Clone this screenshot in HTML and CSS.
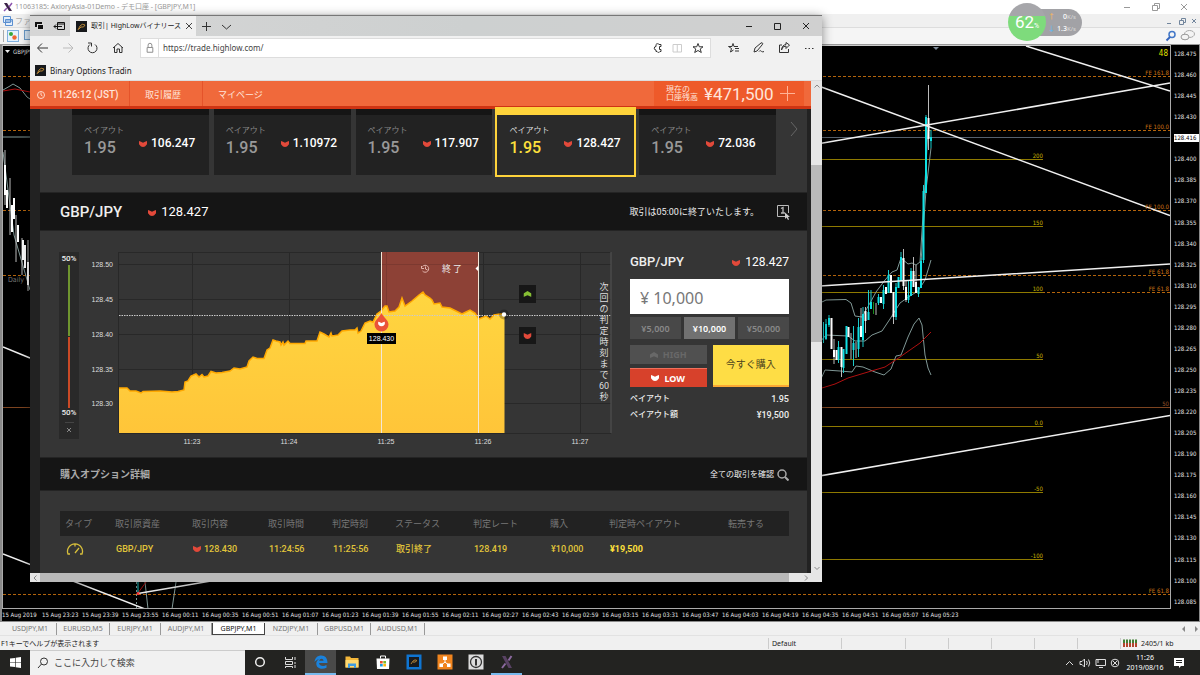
FILE: index.html
```html
<!DOCTYPE html>
<html lang="ja">
<head>
<meta charset="utf-8">
<title>Trading desktop</title>
<link rel="stylesheet" href="styles.css">
</head>
<body>
<svg class="defs" width="0" height="0" aria-hidden="true">
  <symbol id="down" viewBox="0 0 8 6"><path d="M0 0L2 .8L4 1.800L6 .8L8 0V3.200L6 5.500L4 6L2 5.500L0 3.200Z" fill="currentColor"/></symbol>
  <symbol id="up" viewBox="0 0 8 6"><path d="M0 2.600L4 0L8 2.600V6L4 4.200L0 6Z" fill="currentColor"/></symbol>
  <symbol id="fish" viewBox="0 0 11 11"><rect width="11" height="11" fill="#17191c"/><path d="M2 9L4 5Q6 2 9 4Q8 7 5 6L3 8" fill="none" stroke="#b98736"/></symbol>
</svg>

<main class="mt">
  <header class="mt-title">
    <svg class="ic12" viewBox="0 0 12 12"><path d="M2 2H5L10 10H7Z" fill="#3b2348"/><path d="M10 2L7 6M5 7L2 10" stroke="#8d54ad" stroke-width="1.5"/></svg>
    <span>11063185: AxioryAsia-01Demo - デモ口座 - [GBPJPY,M1]</span>
    <svg class="caption" viewBox="0 0 66 12" fill="none" stroke="#999"><path d="M0 6.5H6M28.500 4.500H33.500V9.500H28.500ZM30.500 4.500V2.500H35.500V7.500H33.500M57 3L63 9M63 3L57 9"/></svg>
  </header>
  <div class="mt-menu">
    <svg class="ic12" viewBox="0 0 12 12" fill="#e4effb" stroke="#5b8fd0"><path d="M1.500 1.500H8.500V7.500H1.500ZM3.500 4.500H10.500V10.500H3.500ZM4 6H10"/></svg>
    <span>ファイル</span>
    <svg class="mdi" viewBox="0 0 32 12" fill="none" stroke="#71859c"><path d="M1 8.500H5M13.500 5.500H17.500V9.500H13.500ZM15.500 5V3.500H19.500V7.500H18M26 4L30 8M30 4L26 8"/></svg>
  </div>
  <div class="mt-tools">
    <svg class="tool-left" viewBox="0 0 40 14"><path d="M1.500 1V13" stroke="#aaa"/><rect x="5.500" y="1.500" width="11" height="11" fill="#e6f2fd" stroke="#7fb0df"/><circle cx="9" cy="5" r="2" fill="#38a83a"/><circle cx="12.500" cy="8.500" r="2.200" fill="#f0662e"/><rect x="22.500" y="1.500" width="11" height="9" fill="#d5e6f5" stroke="#6b9bc9"/></svg>
    <svg class="tool-right" viewBox="0 0 34 14" fill="none"><circle cx="8" cy="5.500" r="3" stroke="#4277c8" stroke-width="1.500"/><path d="M6 8L2.500 11.500" stroke="#3767be" stroke-width="2"/><ellipse cx="25.500" cy="5" rx="5" ry="3.500" fill="#f4f4f4" stroke="#aaa"/><ellipse cx="21" cy="8" rx="4" ry="2.800" fill="#f4f4f4" stroke="#999"/></svg>
  </div>

  <section class="chart">
    <svg class="plot" viewBox="3 46 1167 563" preserveAspectRatio="xMinYMin slice" fill="none">
      <g stroke="#b3640c" stroke-dasharray="3 2">
        <path d="M3 76.500H1170M3 130.500H1170M3 210.500H1170M3 275.500H1170M1042 292.500H1170M3 594.500H1170"/>
      </g>
      <path d="M3 407.500H1170" stroke="#7d4420"/>
      <path d="M820 137.500H1170" stroke="#56616d"/>
      <path d="M820 159.500H1043M820 226.500H1043M820 292.500H1043M820 359.500H1043M820 426.500H1043M820 492.500H1043M820 559.500H1043" stroke="#8f7a00"/>
      <g stroke="#809896">
        <path d="M820 303L826 300L846 299.500L851 303L855 316L862 317L870 303L876 292L885 280L892 272L897 270L901 258L908 264L912 263L916 265L920 262L924 200L928 130"/>
        <path d="M820 342L826 335L848 336L855 341L865 341L872 335L882 331L890 319L900 303L910 296L918 291L925 280L928 270L931 260"/>
        <path d="M820 381L825 370L840 371L852 372L856 366L863 367L875 372L884 375L891 369L896 356L901 355L908 337L914 324L919 318L922 325L925 355L928 368L931 375"/>
        <path d="M931 148L926 190L921 262"/>
        <path d="M3 90L10 86L13 84L20 88L27 97L30 99M3 137L30 137M3 152L14 235L30 290M145 582L148 609M176 582L172 609"/>
        <path d="M136.500 582V609" stroke-dasharray="2 2"/>
      </g>
      <path d="M822 388L835 384L848 378L868 372L885 367L900 357L920 343L931 332M3 91L15 89L30 92M138 593L146 582" stroke="#b01010"/>
      <path d="M823.500 322V343M826 319V340M829 315V327M838.500 341V363M843.500 349V373M853.500 326V366M858.500 318V357M863 307V347M868.500 290V320M871 290V309M878.500 294V305M883.500 285V309M888.500 270V293M896 283V320M901 252V281M908.500 280V303M911 268V296M918.500 287V297M921 258V288M923.500 185V263M926 115V193M931 130V148M138 582V593" stroke="#1bcaca"/>
      <path d="M826 324V339M829 318V325M838.500 347V360M843.500 349V368M846.500 326V354M853.500 343V350M858.500 327V349M863 314V340M868.500 312V320M871 302V309M878.500 297V303M883.500 290V304M888.500 275V293M896 287V317M898.500 277V288M901 257V281M908.500 295V300M911 271V296M918.500 287V294M921 261V288M923.500 191V260M926 117V193M931 137V141" stroke="#10e0e4" stroke-width="2"/>
      <path d="M834 339V364M841.500 347V377M851 333V359M856 342V358M861 308V337M865.500 307V333M876 303V315M893.500 292V324M903.500 249V290M906 280V302M913.500 257V287M916 265V293M928.500 85V150M5 150V205M10 178V235M16 215V262M22 238V275M28 240V291" stroke="#bbb"/>
      <path d="M831.500 318V349M834 350V357M836.500 350V360M841.500 347V367M848.500 327V337M861 326V337M865.500 311V321M881 297V303M886 287V294M891 275V293M893.500 292V317M903.500 258V286M906 287V300M913.500 271V287M916 282V293M928.500 118V139M5 165V195M7 190V208M12 205V232M14 198V219M18 225V242M23 240V260M25 245V268M28 262V285" stroke="#fff" stroke-width="2"/>
      <path d="M873.500 302V314" stroke="#1a8a1a"/>
      <path d="M1026 46L1170 91M820 143.500L1170 83M820 86.500L1170 215.500M820 286L1170 264M138 593.500L1170 415.500M3 554L145 609M3 347L30 358" stroke="#f0f0f0" stroke-width="1.500"/>
      <circle cx="138" cy="593.500" r="1.500" fill="#f33"/>
      <path d="M933 47H939L936 50Z" fill="#7d8a99"/>
      <path d="M5 50H10L7.500 53Z" fill="#eee"/>
      <g class="lbl-orange" text-anchor="end"><text x="1169" y="75">FE 161.8</text><text x="1169" y="129">FE 100.0</text><text x="1169" y="209">FE 100.0</text><text x="1169" y="274">FE 61.8</text><text x="1169" y="291">FE 61.8</text><text x="1169" y="593">FE 61.8</text><text class="brown" x="1169" y="406">50</text></g>
      <g class="lbl-yellow" text-anchor="end"><text x="1043" y="158">200</text><text x="1043" y="225">150</text><text x="1043" y="291">100</text><text x="1043" y="358">50</text><text x="1043" y="425">0.0</text><text x="1043" y="491">-50</text><text x="1043" y="558">-100</text></g>
      <text class="count" x="1168" y="56" text-anchor="end">48</text>
      <text class="sym" x="13" y="54">GBPJPY,M1</text>
      <text class="daily" x="8" y="282">Daily</text>
    </svg>
    <div class="prices">
      <span>128.475</span><span>128.460</span><span>128.445</span><span>128.430</span><span class="now">128.416</span><span>128.400</span><span>128.385</span><span>128.370</span><span>128.355</span><span>128.340</span><span>128.325</span><span>128.310</span><span>128.295</span><span>128.280</span><span>128.265</span><span>128.250</span><span>128.235</span><span>128.220</span><span>128.205</span><span>128.190</span><span>128.175</span><span>128.160</span><span>128.145</span><span>128.130</span><span>128.115</span><span>128.100</span><span>128.085</span>
    </div>
    <div class="times">
      <span>15 Aug 2019</span><span>15 Aug 23:23</span><span>15 Aug 23:39</span><span>15 Aug 23:55</span><span>16 Aug 00:11</span><span>16 Aug 00:35</span><span>16 Aug 00:51</span><span>16 Aug 01:07</span><span>16 Aug 01:23</span><span>16 Aug 01:39</span><span>16 Aug 01:55</span><span>16 Aug 02:11</span><span>16 Aug 02:27</span><span>16 Aug 02:43</span><span>16 Aug 02:59</span><span>16 Aug 03:15</span><span>16 Aug 03:31</span><span>16 Aug 03:47</span><span>16 Aug 04:03</span><span>16 Aug 04:19</span><span>16 Aug 04:35</span><span>16 Aug 04:51</span><span>16 Aug 05:07</span><span>16 Aug 05:23</span>
    </div>
  </section>

  <nav class="mt-tabs">
    <button>USDJPY,M1</button><button>EURUSD,M5</button><button>EURJPY,M1</button><button>AUDJPY,M1</button><button class="on">GBPJPY,M1</button><button>NZDJPY,M1</button><button>GBPUSD,M1</button><button>AUDUSD,M1</button>
    <svg class="tab-arrows" viewBox="0 0 20 8" fill="#888"><path d="M5 1V7L2 4ZM15 1V7L18 4Z"/></svg>
  </nav>
  <footer class="mt-status">
    <span class="help">F1キーでヘルプが表示されます</span>
    <span class="cell profile">Default</span>
    <span class="cell w64"></span><span class="cell"></span><span class="cell"></span><span class="cell"></span><span class="cell"></span><span class="cell"></span>
    <span class="cell net"><svg viewBox="0 0 15 8"><path d="M0 1.500H15M0 3.500H15" stroke="#3f7f32" stroke-width="2" stroke-dasharray="2 1"/><path d="M0 6H15" stroke="#b2452e" stroke-width="4" stroke-dasharray="2 1"/></svg>2405/1 kb</span>
  </footer>
</main>

<section class="edge">
  <header class="tabstrip">
    <svg class="strip-ic" viewBox="0 0 40 20" fill="none" stroke="#111"><rect x="5.500" y="6.500" width="6" height="4" fill="#111"/><rect x="7.500" y="8.500" width="6" height="5" fill="#111" stroke="#ddd"/><path d="M27.500 6.500H34.500V13.500H27.500ZM27.500 8H34.500M32 10.500H24M26 8.500L24 10.500L26 12.500"/></svg>
    <div class="tab">
      <svg class="fav"><use href="#fish"/></svg>
      <span>取引| HighLowバイナリース</span>
      <button aria-label="タブを閉じる"><svg viewBox="0 0 8 8"><path d="M1 1L7 7M7 1L1 7" stroke="#444"/></svg></button>
    </div>
    <svg class="newtab" viewBox="0 0 40 20" fill="none" stroke="#333"><path d="M10.500 6V15M6 10.500H15M26 9L30.500 13L35 9"/></svg>
    <svg class="wincap" viewBox="0 0 72 20" fill="none" stroke="#222"><path d="M4 10.500H10M32.500 7.500H38.500V13.500H32.500ZM61 7L67 13M67 7L61 13"/></svg>
  </header>
  <div class="addressbar">
    <svg class="navs" viewBox="0 0 100 24" fill="none" stroke="#333"><path d="M18 12H8M12 7.500L7.500 12L12 16.500"/><path d="M33 12H43M38.500 7.500L43 12L38.500 16.500" stroke="#bbb"/><path d="M65 8.500A4.500 4.500 0 1 1 60 8.500M58 7H61.500V10.500"/><path d="M83 12L88 7.500L93 12M84.500 11V16.500H87V13H89.500V16.500H92V11"/></svg>
    <label class="url">
      <svg class="lock" viewBox="0 0 18 18" fill="none" stroke="#888"><path d="M6.500 8.500H12.500V13.500H6.500ZM7.500 8V6A2 2 0 0 1 11.500 6V8"/></svg>
      <input type="text" aria-label="アドレス" value="https://trade.highlow.com/">
      <svg class="url-ic" viewBox="0 0 60 18" fill="none" stroke="#333"><path d="M11 7.500V5.500H9A1.800 1.800 0 0 0 6 5.500V7.500A1.600 1.600 0 0 0 6 11V12.500H7A1.700 1.700 0 0 0 10 12.500H11V10.500H9.500V7.500Z"/><path d="M23 5.500H31.500V13H23ZM27.250 5V13" stroke="#ccc"/><path d="M48 4.500L49.300 7.800H53L50.200 10L51.300 13.500L48 11.500L44.700 13.500L45.800 10L43 7.800H46.700Z"/></svg>
    </label>
    <svg class="actions" viewBox="0 0 106 24" fill="none" stroke="#333"><path d="M22 7.500L23 10.500H27M22 7.500L21 10.500H17.500L20.500 12.500L19.500 16L22.500 14M24 12.500H28M24 15H28"/><path d="M43 16L44 12L50 7C52 6 52 8 51 9L46 15L43 16M48 15.500C50 13 50 17 53 15.500"/><path d="M71 9H68.500V16.500H77.500V13M70.500 14Q71 10 75 10V12.500L78.500 9L75 6.500V8.500Q71 9 70.500 14"/><path d="M94 12.500H103" stroke-dasharray="1.500 2"/></svg>
  </div>
  <div class="favorites"><svg class="fav"><use href="#fish"/></svg><a href="#">Binary Options Tradin</a></div>

  <div class="view">
    <div class="site">
      <header class="site-head">
        <span class="clock"><svg viewBox="0 0 10 10" fill="none" stroke="#ffd9ca"><circle cx="5" cy="5" r="3.500"/><path d="M5 2.500V5L6.500 6"/></svg><b>11:26:12 (JST)</b></span>
        <a href="#">取引履歴</a>
        <a href="#" class="mypage">マイページ</a>
        <div class="balance"><span>現在の<br>口座残高</span><strong>¥471,500</strong><button aria-label="入金"><svg viewBox="0 0 15 15"><path d="M7.500 0V15M0 7.500H15" stroke="#ffb295"/></svg></button></div>
      </header>
      <div class="page">
        <div class="cards">
          <button class="card"><span class="pl">ペイアウト</span><span class="pv">1.95</span><span class="rate"><svg><use href="#down"/></svg>106.247</span></button>
          <button class="card"><span class="pl">ペイアウト</span><span class="pv">1.95</span><span class="rate"><svg><use href="#down"/></svg>1.10972</span></button>
          <button class="card"><span class="pl">ペイアウト</span><span class="pv">1.95</span><span class="rate"><svg><use href="#down"/></svg>117.907</span></button>
          <button class="card selected"><span class="pl">ペイアウト</span><span class="pv">1.95</span><span class="rate"><svg><use href="#down"/></svg>128.427</span></button>
          <button class="card"><span class="pl">ペイアウト</span><span class="pv">1.95</span><span class="rate"><svg><use href="#down"/></svg>72.036</span></button>
          <button class="next" aria-label="次へ"><svg viewBox="0 0 8 16" fill="none" stroke="#666"><path d="M1 1L7 8L1 15"/></svg></button>
        </div>
        <div class="bar pairbar">
          <h1>GBP/JPY</h1>
          <span class="rate thin"><svg><use href="#down"/></svg>128.427</span>
          <span class="until">取引は05:00に終了いたします。</span>
          <svg class="oneclick" viewBox="0 0 15 16"><path d="M9 12.500H1.500V1.500H12.500V9" fill="none" stroke="#bbb"/><path d="M5 4.500L7 3.500V9M5 9H9" fill="none" stroke="#bbb" stroke-width="1.300"/><path d="M9 8.500V15L10.500 13.500L12 16L13 15.500L12 13H14Z" fill="#ccc"/></svg>
        </div>
        <div class="trade">
          <div class="sentiment"><span>50%</span><i class="green"></i><i class="red"></i><span>50%</span><hr><svg viewBox="0 0 6 6"><path d="M1 1L5 5M5 1L1 5" stroke="#888"/></svg></div>
          <div class="ratebox">
            <svg class="rates" viewBox="92 252 520 196">
              <defs><linearGradient id="gold" x1="0" y1="0" x2="0" y2="1"><stop offset="0" stop-color="#ffd640"/><stop offset="1" stop-color="#ffc539"/></linearGradient></defs>
              <path d="M119 252.500H611M119 264.500H611M119 299.500H611M119 334.500H611M119 369.500H611M119 403.500H611M119 433.500H611M118.500 252V433M192.500 252V433M289.500 252V433M386.500 252V433M483.500 252V433M580.500 252V433" stroke="#282828" fill="none"/>
              <rect x="381" y="252" width="98" height="181" fill="#8d4136"/>
              <path d="M386.500 252V310M381 264.500H479" stroke="#7c3930"/>
              <path fill="url(#gold)" d="M119 433V388L127 388L130 391L136 391L141 393L143 391.500L160 391L172 392L178 391.500L184 390L185 382L188 381L191 376L196 374L199 377L202 374.500L204 377L208 376L211 371.500L216 373L222 372.500L230 371L234 368L240 369L247 367L249 361L253 357L257 358.500L264 358.500L267 350L270 348L273 340L276 341L280 342L281 345L283 342L284 345L288 341L290 343.500L305 343.500L306 341L317 341L320 332L324 334L329 337L331 333L332 336L338 335L342 331L350 330L355 330L357 328L358 333L361 331L365 323L370 321L373 322L377 314L381 311L385 306L387 306L389 312L395 311L399 307L402 298L405 306L412 301L419 295L423 292L425 295L430 298L432 300L434 304L440 303L442 307L450 308L456 311L462 314L466 312L470 310L475 313L479 319L486 316L490 319L494 315L500 314L504.500 314V433Z"/>
              <path fill="none" stroke="#ffa800" stroke-width="1.500" d="M119 388L127 388L130 391L136 391L141 393L143 391.500L160 391L172 392L178 391.500L184 390L185 382L188 381L191 376L196 374L199 377L202 374.500L204 377L208 376L211 371.500L216 373L222 372.500L230 371L234 368L240 369L247 367L249 361L253 357L257 358.500L264 358.500L267 350L270 348L273 340L276 341L280 342L281 345L283 342L284 345L288 341L290 343.500L305 343.500L306 341L317 341L320 332L324 334L329 337L331 333L332 336L338 335L342 331L350 330L355 330L357 328L358 333L361 331L365 323L370 321L373 322L377 314L381 311L385 306L387 306L389 312L395 311L399 307L402 298L405 306L412 301L419 295L423 292L425 295L430 298L432 300L434 304L440 303L442 307L450 308L456 311L462 314L466 312L470 310L475 313L479 319L486 316L490 319L494 315L500 314L504.500 314"/>
              <path d="M119 315.500H611" stroke="#c9c9c9" stroke-dasharray="1.500 1"/>
              <path d="M381.500 252V433M478.500 252V433" stroke="#f3e6d8"/>
              <path d="M611 252V433" stroke="#555"/>
              <path d="M381.500 313C384 318 388.500 320 388.500 324.500A7 7 0 0 1 374.500 324.500C374.500 320 379 318 381.500 313Z" fill="#ea5339"/>
              <use href="#down" x="378" y="321.500" width="7" height="5" color="#fff"/>
              <rect x="367" y="333" width="29" height="11" fill="#000"/>
              <text class="tag" x="381.500" y="341">128.430</text>
              <g fill="none" stroke="#e3b5ad"><path d="M422.500 266.500A3.500 3.500 0 1 1 422.500 271M421.500 266V268.500H424M425.500 266.500V269L427.500 270"/></g>
              <text class="end" x="442" y="272">終 了</text>
              <path d="M478 266V271L475.500 268.500Z" fill="#fff"/>
              <circle cx="504" cy="314.500" r="5" fill="#000" opacity=".25"/><circle cx="504" cy="314.500" r="2.200" fill="#fff"/>
              <rect x="519" y="285" width="17" height="18" fill="#171717"/><use href="#up" x="523.500" y="291" width="8" height="6" color="#86bf34"/>
              <rect x="519" y="327" width="17" height="17" fill="#171717"/><use href="#down" x="523.500" y="333" width="8" height="6" color="#e2493a"/>
              <g class="axis-y"><text x="113" y="267">128.50</text><text x="113" y="302">128.45</text><text x="113" y="337">128.40</text><text x="113" y="372">128.35</text><text x="113" y="406">128.30</text></g>
              <g class="axis-x"><text x="192" y="444">11:23</text><text x="289" y="444">11:24</text><text x="386" y="444">11:25</text><text x="483" y="444">11:26</text><text x="580" y="444">11:27</text></g>
            </svg>
            <p class="countdown">次回の判定時刻まで60秒</p>
          </div>
          <form class="order">
            <div class="order-head"><h2>GBP/JPY</h2><span class="rate thin"><svg><use href="#down"/></svg>128.427</span></div>
            <input class="amount" type="text" aria-label="購入金額" value="¥ 10,000">
            <div class="presets"><button type="button">¥5,000</button><button type="button" class="on">¥10,000</button><button type="button">¥50,000</button></div>
            <div class="acts">
              <button type="button" class="high"><svg><use href="#up"/></svg>HIGH</button>
              <button type="button" class="low"><svg><use href="#down"/></svg>LOW</button>
              <button type="button" class="buy">今すぐ購入</button>
            </div>
            <dl><dt>ペイアウト</dt><dd>1.95</dd><dt>ペイアウト額</dt><dd>¥19,500</dd></dl>
          </form>
        </div>
        <div class="bar detailbar"><h3>購入オプション詳細</h3><a href="#">全ての取引を確認 <svg viewBox="0 0 12 12" fill="none" stroke="#aaa"><circle cx="5" cy="5" r="4" stroke-width="1.500"/><path d="M8 8L11.500 11.500" stroke-width="2"/></svg></a></div>
        <div class="details">
          <table>
            <colgroup><col class="c50"><col class="c77"><col class="c76"><col class="c64"><col class="c63"><col class="c78"><col class="c77"><col class="c59"><col class="c119"><col class="c66"></colgroup>
            <thead><tr><th>タイプ</th><th>取引原資産</th><th>取引内容</th><th>取引時間</th><th>判定時刻</th><th>ステータス</th><th>判定レート</th><th>購入</th><th>判定時ペイアウト</th><th>転売する</th></tr></thead>
            <tbody><tr><td><svg class="gauge" viewBox="0 0 18 12" fill="none" stroke="#d7bf3b" stroke-width="1.300"><path d="M4 11H2A7.500 7.500 0 1 1 16 11H14M9 10L13 5M9 1V3.500"/></svg></td><td>GBP/JPY</td><td><svg class="dn"><use href="#down"/></svg>128.430</td><td>11:24:56</td><td>11:25:56</td><td>取引終了</td><td>128.419</td><td>¥10,000</td><td><b>¥19,500</b></td><td></td></tr></tbody>
          </table>
        </div>
      </div>
    </div>
    <div class="vscroll"><svg viewBox="0 0 10 10"><path d="M2.500 6.500L5 4L7.500 6.500" fill="none" stroke="#888"/></svg><i></i><svg viewBox="0 0 10 10"><path d="M2.500 4L5 6.500L7.500 4" fill="none" stroke="#888"/></svg></div>
  </div>
  <div class="hscroll"><svg viewBox="0 0 10 10"><path d="M6.500 2.500L4 5L6.500 7.500" fill="none" stroke="#888"/></svg><i></i><svg viewBox="0 0 10 10"><path d="M4 2.500L6.500 5L4 7.500" fill="none" stroke="#888"/></svg></div>
</section>

<aside class="meter">
  <div class="pill"><p><em class="u">↑</em>0<small>K/s</small></p><p><em class="d">↓</em>1.3<small>K/s</small></p></div>
  <div class="ball">62<small>%</small></div>
</aside>

<footer class="taskbar">
  <button class="start" aria-label="スタート"><svg viewBox="0 0 12 12" fill="#fff"><path d="M0 1.700L5.500 1V5.600H0ZM6.200 .9L12 0V5.600H6.200ZM0 6.300H5.500V11L0 10.300ZM6.200 6.300H12V12L6.200 11.100Z"/></svg></button>
  <label class="search"><svg viewBox="0 0 12 12" fill="none" stroke="#333"><circle cx="7" cy="4.500" r="3.500"/><path d="M4.500 7L1 11"/></svg><input type="text" placeholder="ここに入力して検索" aria-label="検索"></label>
  <div class="apps">
    <button class="sys" aria-label="Cortana"><svg viewBox="0 0 16 16"><circle cx="8" cy="8" r="4.300" fill="none" stroke="#eee" stroke-width="1.500"/></svg></button>
    <button class="sys" aria-label="タスク ビュー"><svg viewBox="0 0 16 16" fill="none" stroke="#ddd"><path d="M3.500 3V5.500H10.500V3M3.500 7.500H10.500V10.500H3.500ZM3.500 14V12.500H10.500V14M13 3V6M13 8V10M13 11V14"/></svg></button>
    <button class="active run" aria-label="Edge"><svg viewBox="0 0 16 16" fill="#1a82dc"><path d="M1.500 8C2 3.500 5 1.500 8.200 1.500C12.500 1.500 14.500 4.500 14.500 9H6C6.200 12 10.500 12.800 13.500 11V13.800C9 16 3.500 14.500 3.300 10C3.200 7.500 4.500 6 6 5.200C4.200 5.500 2.700 6.500 1.500 8ZM6.200 6.800H10.500C10.400 4 6.800 4 6.200 6.800Z" fill-rule="evenodd"/></svg></button>
    <button aria-label="エクスプローラー"><svg viewBox="0 0 16 16"><path d="M1.500 2.500H6L7 4H14.500V13.500H1.500Z" fill="#f3b73a"/><path d="M1.500 6H14.500V13.500H1.500Z" fill="#ffd970"/><path d="M4 9.500H12V14H10V12H6V14H4Z" fill="#3f9be0"/></svg></button>
    <button aria-label="ストア"><svg viewBox="0 0 16 16"><path d="M1.500 4.500H14.500L14 15H2Z" fill="#fff"/><path d="M5.500 4.500V2H10.500V4.500" fill="none" stroke="#fff"/><path d="M5 7H7.700V9.500H5Z" fill="#e94e2c"/><path d="M8.300 7H11V9.500H8.300Z" fill="#7db82a"/><path d="M5 10H7.700V12.500H5Z" fill="#1e9de0"/><path d="M8.300 10H11V12.500H8.300Z" fill="#fcb813"/></svg></button>
    <button aria-label="HighLow"><svg viewBox="0 0 16 16"><rect x=".5" y=".5" width="15" height="15" fill="#0f75d2"/><rect x="3" y="3" width="10" height="10" fill="#181a1e"/><path d="M5 10L7 7Q9 5 11 6.500Q9 9 7 8" fill="none" stroke="#b08238"/></svg></button>
    <button aria-label="XAMPP"><svg viewBox="0 0 16 16"><rect x=".5" y=".5" width="15" height="15" fill="#f0841e"/><path d="M8 5V8L4.500 11M8 8L11.500 11" stroke="#fff" fill="none"/><path d="M6 2.500H10V6H6ZM2.500 9.500H6V13H2.500ZM10 9.500H13.500V13H10Z" fill="#fff"/></svg></button>
    <button aria-label="1Password"><svg viewBox="0 0 16 16"><rect x=".5" y=".5" width="15" height="15" fill="#ddd"/><circle cx="8" cy="8" r="5.500" fill="none" stroke="#333" stroke-width="1.300"/><path d="M8 5V11.500" stroke="#333" stroke-width="2"/></svg></button>
    <button class="run" aria-label="MetaTrader"><svg viewBox="0 0 16 16"><path d="M3 2H6.500L13 14H9.500Z" fill="#594264"/><path d="M12.500 2L9.500 6.500M6.500 9.500L3 14" stroke="#8c6aa0" stroke-width="2"/></svg></button>
  </div>
  <div class="tray">
    <svg viewBox="0 0 62 14" fill="none" stroke="#ddd"><path d="M3 9L6.500 5.500L10 9M17 5.500H19L21.500 3V11L19 8.500H17ZM23.500 5Q25 7 23.500 9M25.500 3.500Q28 7 25.500 10.500M33 3.500H42.500V9.500H33ZM36 11.500H40M35 3V7"/><circle cx="52" cy="7" r="3.800"/><path d="M50 5L54 9M54 5L50 9"/></svg>
    <time>11:26<br>2019/08/16</time>
    <svg class="notice" viewBox="0 0 12 12" fill="#fff"><path d="M1 1H11V9H8L6 11V9H1Z"/><path d="M3 3.500H9M3 5.500H9" stroke="#222"/></svg>
  </div>
</footer>
</body>
</html>
```
FILE: styles.css
```css
* { box-sizing: border-box; }
body {
  margin: 0;
  height: 100vh;
  display: flex;
  flex-direction: column;
  position: relative;
  overflow: hidden;
  background: #f0f0f0;
  font: 8px/10px "Noto Sans", "Noto Sans CJK JP", sans-serif;
}
button { margin: 0; padding: 0; border: 0; background: none; font: inherit; color: inherit; }
input { font: inherit; border: 0; padding: 0; min-width: 0; background: none; }
a { color: inherit; text-decoration: none; }
h1, h2, h3, p, dl, dd { margin: 0; font-weight: 500; }
svg { display: block; flex: none; }
.defs { position: absolute; }

/* terminal window */
.mt { flex: 1; min-height: 0; display: flex; flex-direction: column; }
.mt-title, .mt-menu, .mt-tools { display: flex; align-items: center; flex: none; padding: 0 2px; gap: 1px; }
.mt-title { height: 14px; background: #fff; color: #999; font-size: 7px; }
.mt-menu { height: 14px; background: #f0f0f0; color: #aaa; border-bottom: 1px solid #ddd; }
.mt-tools { height: 17px; background: #f5f5f5; justify-content: space-between; border-bottom: 1px solid #999; }
.ic12 { width: 12px; height: 12px; }
.caption { width: 66px; height: 12px; margin-left: auto; margin-right: 8px; }
.mdi { width: 32px; height: 12px; margin-left: auto; }
.tool-left { width: 40px; height: 14px; }
.tool-right { width: 34px; height: 14px; }
.chart {
  flex: 1;
  min-height: 0;
  display: grid;
  grid-template-columns: minmax(0, 1fr) 28px;
  grid-template-rows: minmax(0, 1fr) 12px;
  background: #000;
  border: solid #8a8a8a;
  border-width: 0 1px 1px 2px;
  color: #e4e4e4;
  font: 6px/8px "DejaVu Sans Condensed", "DejaVu Sans", sans-serif;
}
.plot { width: 100%; height: 100%; border: 1px solid #aaa; border-top-color: #ccc; }
.prices { display: flex; flex-direction: column; justify-content: space-between; padding: 5px 0 3px 3px; }
.prices .now { background: #fff; color: #000; }
.times { display: flex; white-space: nowrap; padding-top: 2px; }
.times span { width: 40px; }
.lbl-orange { fill: #cc7414; font-size: 6px; }
.lbl-orange .brown { fill: #94532a; }
.lbl-yellow { fill: #c9b200; font-size: 6px; }
.count { fill: #e2e200; font-size: 8px; }
.sym { fill: #ddd; font-size: 6px; }
.daily { fill: #777; font-size: 7px; }
.mt-tabs { height: 14px; flex: none; display: flex; align-items: center; color: #777; font-size: 7px; padding-left: 4px; border-bottom: 1px solid #e2e2e2; }
.mt-tabs button { height: 12px; padding: 0 6px; min-width: 53px; line-height: 12px; border-right: 1px solid #999; }
.mt-tabs button:nth-child(3), .mt-tabs button:nth-child(4) { min-width: 51px; }
.mt-tabs .on { background: #fff; color: #111; border: 1px solid #444; border-top: 0; }
.tab-arrows { width: 20px; height: 8px; margin-left: auto; }
.mt-status { height: 14px; flex: none; display: flex; align-items: center; font-size: 7px; line-height: 11px; color: #222; white-space: nowrap; }
.help { flex: 1; padding-left: 1px; }
.cell { height: 11px; width: 43px; border-left: 1px solid #ccc; }
.cell.profile { width: 73px; padding-left: 3px; }
.cell.w64 { width: 64px; }
.cell.net { width: 80px; display: flex; align-items: center; gap: 3px; padding-left: 2px; }
.net svg { width: 15px; height: 8px; }

/* browser window */
.edge {
  position: absolute;
  left: 30px;
  top: 15px;
  width: 66%;
  height: 84%;
  display: flex;
  flex-direction: column;
  border-top: 1px solid #777;
  background: #f1f1f1;
  box-shadow: 0 2px 10px rgba(0, 0, 0, .45);
}
.tabstrip { height: 20px; flex: none; display: flex; background: linear-gradient(90deg, #d6d6d6, #cdd0d0 55%, #d0d0d0); }
.strip-ic { width: 40px; height: 20px; }
.tab { width: 126px; display: flex; align-items: center; gap: 4px; padding: 0 6px; background: #f1f1f1; color: #222; font-size: 7px; }
.tab span { flex: 1; white-space: nowrap; line-height: 14px; }
.tab button svg { width: 8px; height: 8px; }
.fav { width: 11px; height: 11px; }
.newtab { width: 40px; height: 20px; }
.wincap { width: 72px; height: 20px; margin-left: auto; margin-right: 8px; }
.addressbar { height: 24px; flex: none; display: flex; align-items: center; }
.navs { width: 100px; height: 24px; margin-right: 10px; }
.url { flex: 1; height: 20px; display: flex; align-items: center; background: #fff; border: 1px solid #ddd; }
.lock { width: 18px; height: 18px; border-right: 1px solid #ddd; }
.url input { flex: 1; padding-left: 4px; color: #444; }
.url-ic { width: 60px; height: 18px; }
.actions { width: 106px; height: 24px; margin-right: 5px; }
.favorites { height: 21px; flex: none; display: flex; align-items: center; gap: 4px; padding-left: 5px; color: #222; border-bottom: 1px solid #ddd; line-height: 13px; }
.view { flex: 1; min-height: 0; display: flex; }
.vscroll { width: 11px; background: #e6e6e6; display: flex; flex-direction: column; align-items: center; }
.vscroll svg, .hscroll svg { width: 10px; height: 10px; }
.vscroll i { width: 100%; height: 36%; margin: 74px 0 auto; background: #b9b9b9; }
.hscroll { height: 9px; flex: none; display: flex; align-items: center; background: #e6e6e6; padding-right: 11px; }
.hscroll i { flex: 1; height: 100%; margin-right: 12px; background: #b9b9b9; }

/* trading site */
.site { flex: 1; min-width: 0; overflow: hidden; background: #222; color: #eee; font-family: Roboto, "Noto Sans CJK JP", sans-serif; display: flex; flex-direction: column; }
.site-head { height: 28px; flex: none; display: flex; align-items: stretch; background: #f0693b; border-bottom: 3px solid #cf3413; padding-right: 7px; color: #ffe5db; font-size: 9px; line-height: 28px; }
.clock { width: 100px; display: flex; align-items: center; gap: 6px; padding: 2px 0 0 6px; border-right: 1px solid #e5532a; font-size: 10px; }
.clock b { font-weight: 500; }
.clock svg { width: 10px; height: 10px; }
.site-head a { width: 73px; padding-left: 15px; border-right: 1px solid #e5532a; }
.site-head .mypage { border: 0; width: 78px; }
.balance { margin-left: auto; width: 150px; display: flex; align-items: center; gap: 6px; padding-left: 12px; background: #ee5a2a; font-size: 8px; line-height: 8px; }
.balance strong { font-size: 17px; font-weight: 400; }
.balance svg { width: 15px; height: 15px; }
.page { flex: 1; min-height: 0; margin: 0 4px 0 10px; background: #353535; }
.cards { display: flex; gap: 5px; padding: 0 0 17px 32px; }
.card {
  flex: 1;
  height: 66px;
  display: grid;
  grid-template-columns: auto 1fr;
  grid-template-rows: 16px 18px;
  column-gap: 15px;
  padding: 8px 0 0 12px;
  background: #222;
  border-top: 6px solid #151515;
  text-align: left;
}
.card .pl { color: #888; font-size: 8px; line-height: 16px; grid-row: 1; grid-column: 1; white-space: nowrap; }
.card .pv { color: #999; font-size: 16px; line-height: 18px; font-weight: 500; grid-row: 2; grid-column: 1; }
.card .rate { grid-row: 1 / 3; grid-column: 2; align-self: center; margin-top: 6px; font-size: 12px; font-weight: 500; }
.card.selected { background: #2a2a2a; border-top-color: #fed33b; box-shadow: 0 0 0 2px #fed33b; }
.selected .pl { color: #ddd; }
.card.selected .pv { color: #fee03c; }
.rate { display: flex; align-items: center; gap: 4px; color: #fff; }
.rate svg { width: 8px; height: 6px; margin-top: 2px; color: #e2493a; }
.next { width: 26px; height: 40px; display: flex; align-items: center; justify-content: center; }
.next svg { width: 8px; height: 16px; }
.bar { display: flex; align-items: center; background: #151515; border: solid #242424; border-width: 1px 0; padding: 0 18px 0 20px; }
.pairbar { height: 39px; padding-right: 16px; }
.pairbar h1 { font-size: 15px; }
.thin { font-size: 13px; gap: 5px; }
.pairbar .rate { margin-left: 26px; }
.until { margin-left: auto; font-size: 9px; }
.oneclick { width: 15px; height: 16px; margin-left: 17px; }
.trade { display: flex; padding: 21px 18px 9px 19px; }
.sentiment { width: 20px; height: 187px; margin-right: 13px; padding: 2px 0; display: flex; flex-direction: column; align-items: center; background: #292929; font-size: 8px; font-weight: 500; }
.sentiment i { width: 2px; flex: 1; margin-top: 1px; }
.sentiment .green { background: #6f952f; }
.sentiment .red { background: #cb4a26; }
.sentiment hr { width: 9px; margin: 4px 0; border: 0; border-top: 1px solid #444; }
.sentiment svg { width: 6px; height: 6px; margin-bottom: 4px; }
.ratebox { flex: 1; min-width: 0; position: relative; }
.rates { width: 100%; height: auto; }
.rates text { fill: #ddd; font: 7px "Liberation Sans", sans-serif; }
.rates .tag, .rates .axis-x text { text-anchor: middle; }
.rates .axis-y text { text-anchor: end; }
.rates .tag { fill: #fff; }
.rates .end { fill: #eee; font: 9px "Noto Sans CJK JP", sans-serif; }
.countdown { position: absolute; top: 30px; right: 2px; width: 12px; font-size: 9px; line-height: 11px; text-align: center; font-weight: 400; color: #ddd; overflow-wrap: anywhere; }
.order { width: 159px; margin-left: 18px; }
.order-head { display: flex; justify-content: space-between; align-items: center; height: 20px; margin-bottom: 7px; }
.order h2 { font-size: 13px; }
.order .rate { font-size: 12px; }
.amount { display: block; width: 100%; height: 35px; padding: 3px 10px 0; background: #fff; color: #777; font: 16px "Noto Sans", sans-serif; }
.presets { display: flex; gap: 3px; margin: 3px 0 6px; }
.presets button { flex: 1; height: 22px; background: #484848; color: #888; font: 600 9px "Noto Sans", sans-serif; }
.presets .on { background: #717171; color: #fff; }
.acts { display: grid; grid-template-columns: 1fr 1fr; gap: 4px 6px; }
.high, .low { height: 19px; display: flex; align-items: center; justify-content: center; gap: 5px; background: #505050; color: #686868; font: 700 9px "Noto Sans", sans-serif; }
.low { background: #d7412b; color: #fff; border-top: 1px solid #f0715c; }
.acts svg { width: 8px; height: 6px; }
.buy { grid-column: 2; grid-row: 1 / 3; background: #fedd45; color: #4b431d; border-bottom: 2px solid #fba834; font-size: 10px; }
.order dl { display: grid; grid-template-columns: 1fr auto; font-size: 9px; line-height: 16px; padding-top: 4px; }
.order dt { font-size: 8px; }
.order dd { text-align: right; }
.detailbar { height: 34px; justify-content: space-between; padding-top: 2px; }
.detailbar h3 { font-size: 10px; font-weight: 700; color: #aaa; }
.detailbar a { display: flex; align-items: center; gap: 3px; font-size: 8px; }
.detailbar svg { width: 12px; height: 12px; }
.details { padding: 20px 18px 0 20px; }
table { width: 100%; border-collapse: collapse; table-layout: fixed; font-size: 9px; text-align: left; }
th { height: 25px; background: #222; color: #777; font-weight: 400; padding: 0 0 0 5px; white-space: nowrap; }
td { height: 25px; color: #e1c53a; padding: 0 0 0 6px; white-space: nowrap; font-weight: 500; }
td b { color: #fee03c; }
.gauge { width: 18px; height: 12px; }
.dn { display: inline-block; width: 8px; height: 6px; margin-right: 3px; color: #e2493a; }
.c50 { width: 50px; } .c77 { width: 77px; } .c76 { width: 76px; } .c64 { width: 64px; } .c63 { width: 63px; }
.c78 { width: 78px; } .c59 { width: 59px; } .c119 { width: 119px; } .c66 { width: 66px; }

/* network meter */
.meter { position: absolute; top: 3px; right: 118px; width: 74px; height: 38px; color: #fff; }
.pill { position: absolute; right: 0; top: 6px; width: 48px; height: 27px; padding: 2px 6px 0 14px; border-radius: 0 14px 14px 0; background: #a2a2a6; font-size: 7px; line-height: 12px; text-align: right; }
.pill small { font-size: 6px; color: #d4d4d4; }
.pill em { float: left; font-style: normal; }
.u { color: #f6b65a; }
.d { color: #5cb9f3; }
.ball { position: absolute; left: 0; top: 0; width: 38px; height: 38px; border-radius: 50%; background: linear-gradient(#a6a6aa 34%, #7edb7c 34%); font: 17px/38px Roboto, sans-serif; text-align: center; }
.ball small { font-size: 7px; }

/* taskbar */
.taskbar { height: 25px; flex: none; display: flex; background: #232321; color: #fff; }
.start { width: 30px; display: flex; align-items: center; justify-content: center; }
.start svg { width: 11px; height: 11px; }
.search { width: 215px; display: flex; align-items: center; gap: 5px; padding-left: 7px; background: #f1f1f1; border-top: 1px solid #ccc; }
.search svg { width: 12px; height: 12px; }
.search input { flex: 1; font-size: 9px; }
.search input::placeholder { color: #444; opacity: 1; }
.apps { display: flex; }
.apps button { width: 31px; display: flex; align-items: center; justify-content: center; border-bottom: 2px solid transparent; }
.apps .sys { width: 30px; }
.apps svg { width: 16px; height: 16px; }
.apps .active { background: #4a4a49; }
.apps .run { border-bottom-color: #76b9ed; }
.tray { margin-left: auto; display: flex; align-items: center; padding-right: 15px; }
.tray svg { width: 62px; height: 14px; }
.tray time { width: 40px; margin-right: 8px; text-align: center; font-size: 7px; line-height: 10px; }
.tray .notice { width: 12px; height: 12px; }
```
